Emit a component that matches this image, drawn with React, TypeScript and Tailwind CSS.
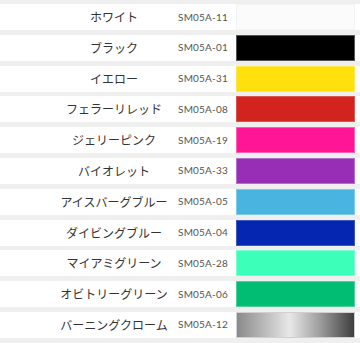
const colors = [
  { name: 'ホワイト', code: 'SM05A-11', swatch: 'bg-[#fbfbfb] border-[#f3f3f3]' },
  { name: 'ブラック', code: 'SM05A-01', swatch: 'bg-[#000000] border-[#555555]' },
  { name: 'イエロー', code: 'SM05A-31', swatch: 'bg-[#ffdf0c] border-[#ffe94f]' },
  { name: 'フェラーリレッド', code: 'SM05A-08', swatch: 'bg-[#d2231e] border-[#dd5550]' },
  { name: 'ジェリーピンク', code: 'SM05A-19', swatch: 'bg-[#ff1596] border-[#ff5fb4]' },
  { name: 'バイオレット', code: 'SM05A-33', swatch: 'bg-[#982db6] border-[#b46ecb]' },
  { name: 'アイスバーグブルー', code: 'SM05A-05', swatch: 'bg-[#4ab4e0] border-[#7fcaea]' },
  { name: 'ダイビングブルー', code: 'SM05A-04', swatch: 'bg-[#0526b1] border-[#3d58c4]' },
  { name: 'マイアミグリーン', code: 'SM05A-28', swatch: 'bg-[#3cffb9] border-[#7affd0]' },
  { name: 'オビトリーグリーン', code: 'SM05A-06', swatch: 'bg-[#01bd73] border-[#4dd19d]' },
  {
    name: 'バーニングクローム',
    code: 'SM05A-12',
    swatch:
      'bg-[linear-gradient(90deg,#8a8a8a_0%,#bdbdbd_25%,#e8e8e8_45%,#a0a0a0_70%,#3e3e3e_100%)] border-[#d0d0d0]',
  },
];

export default function App() {
  return (
    <div className="w-[360px] h-[343px] bg-[#efefef] pt-[4px] flex flex-col gap-[4.8px] overflow-hidden">
      {colors.map((c) => (
        <div key={c.code} className="flex items-stretch h-[26px] bg-white shrink-0">
          <div className="ml-[58px] w-[112px] flex items-center justify-center text-[12px] text-[#333] font-['Noto_Sans_CJK_JP',sans-serif] whitespace-nowrap">
            {c.name}
          </div>
          <div className="w-[66px] flex items-center justify-center text-[10px] text-[#555] font-['Lato',sans-serif] tracking-[0.2px]">
            {c.code}
          </div>
          <div className={`w-[119px] border ${c.swatch}`} />
        </div>
      ))}
    </div>
  );
}
